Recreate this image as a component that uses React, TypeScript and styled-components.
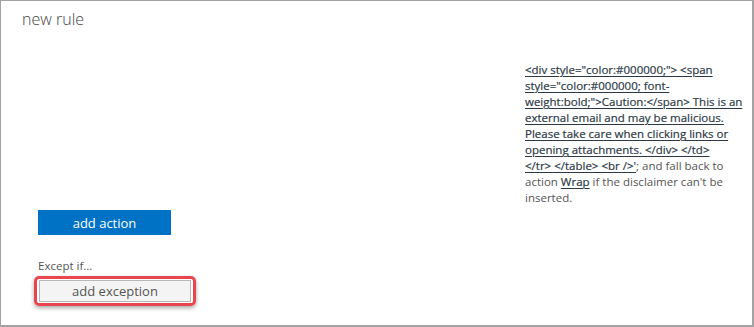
import React from "react";
import styled, { createGlobalStyle } from "styled-components";

const Global = createGlobalStyle`
  html, body { margin: 0; padding: 0; background: #ffffff; }
  body { font-family: "Open Sans", "Noto Sans", "Liberation Sans", sans-serif; }
  * { box-sizing: border-box; }
`;

const Frame = styled.div`
  width: 754px;
  height: 327px;
  border-style: solid;
  border-color: #a3a3a3;
  border-width: 1px 2px 2px 1px;
  background: #ffffff;
  display: flex;
  flex-direction: column;
  overflow: hidden;
`;

const Title = styled.h1`
  margin: 7px 0 0 21px;
  font-family: "Open Sans", "Noto Sans", sans-serif;
  font-weight: 300;
  font-size: 16px;
  line-height: 22px;
  color: #444444;
`;

const Body = styled.div`
  display: flex;
  flex-direction: column;
  padding-left: 37px;
`;

const Description = styled.div`
  margin-top: 32px;
  margin-left: 487px;
  width: 225px;
  font-size: 11.5px;
  line-height: 16px;
  color: #555555;
`;

const Line = styled.span`
  display: block;
  white-space: nowrap;
`;

const Link = styled.span`
  color: #2c3a48;
  text-decoration: underline;
  text-decoration-thickness: 1px;
  text-underline-offset: 2px;
  -webkit-text-stroke: 0.2px #2c3a48;
`;

const PrimaryButton = styled.button`
  margin-top: 4px;
  width: 133px;
  height: 25px;
  border: none;
  background: #0072c6;
  color: #ffffff;
  font-family: "Open Sans", "Noto Sans", sans-serif;
  font-size: 13px;
  padding: 0;
  cursor: pointer;
`;

const Label = styled.div`
  margin-top: 23px;
  font-size: 11.5px;
  line-height: 16px;
  color: #555555;
`;

const Highlight = styled.div`
  position: relative;
  margin-top: 6px;
  margin-left: 1px;
  width: 152px;
  &::after {
    content: "";
    position: absolute;
    left: -5px;
    top: -4px;
    right: -5px;
    bottom: -4px;
    border: 3px solid #e8464e;
    border-radius: 5px;
    box-shadow: 0 2px 4px rgba(0, 0, 0, 0.35);
    pointer-events: none;
  }
`;

const SecondaryButton = styled.button`
  display: block;
  width: 152px;
  height: 22px;
  border: 1px solid #b8b8b8;
  background: #f4f4f4;
  color: #555555;
  font-family: "Open Sans", "Noto Sans", sans-serif;
  font-size: 13px;
  padding: 0;
  cursor: pointer;
`;

export default function App() {
  return (
    <>
      <Global />
      <Frame>
        <Title>new rule</Title>
        <Body>
          <Description>
            <Line>
              <Link>&lt;div style="color:#000000;"&gt; &lt;span</Link>
            </Line>
            <Line>
              <Link>style="color:#000000; font-</Link>
            </Line>
            <Line>
              <Link>weight:bold;"&gt;Caution:&lt;/span&gt; This is an</Link>
            </Line>
            <Line>
              <Link>external email and may be malicious.</Link>
            </Line>
            <Line>
              <Link>Please take care when clicking links or</Link>
            </Line>
            <Line>
              <Link>opening attachments. &lt;/div&gt; &lt;/td&gt;</Link>
            </Line>
            <Line>
              <Link>&lt;/tr&gt; &lt;/table&gt; &lt;br /&gt;'</Link>; and fall back to
            </Line>
            <Line>
              action <Link>Wrap</Link> if the disclaimer can't be
            </Line>
            <Line>inserted.</Line>
          </Description>
          <PrimaryButton>add action</PrimaryButton>
          <Label>Except if...</Label>
          <Highlight>
            <SecondaryButton>add exception</SecondaryButton>
          </Highlight>
        </Body>
      </Frame>
    </>
  );
}
